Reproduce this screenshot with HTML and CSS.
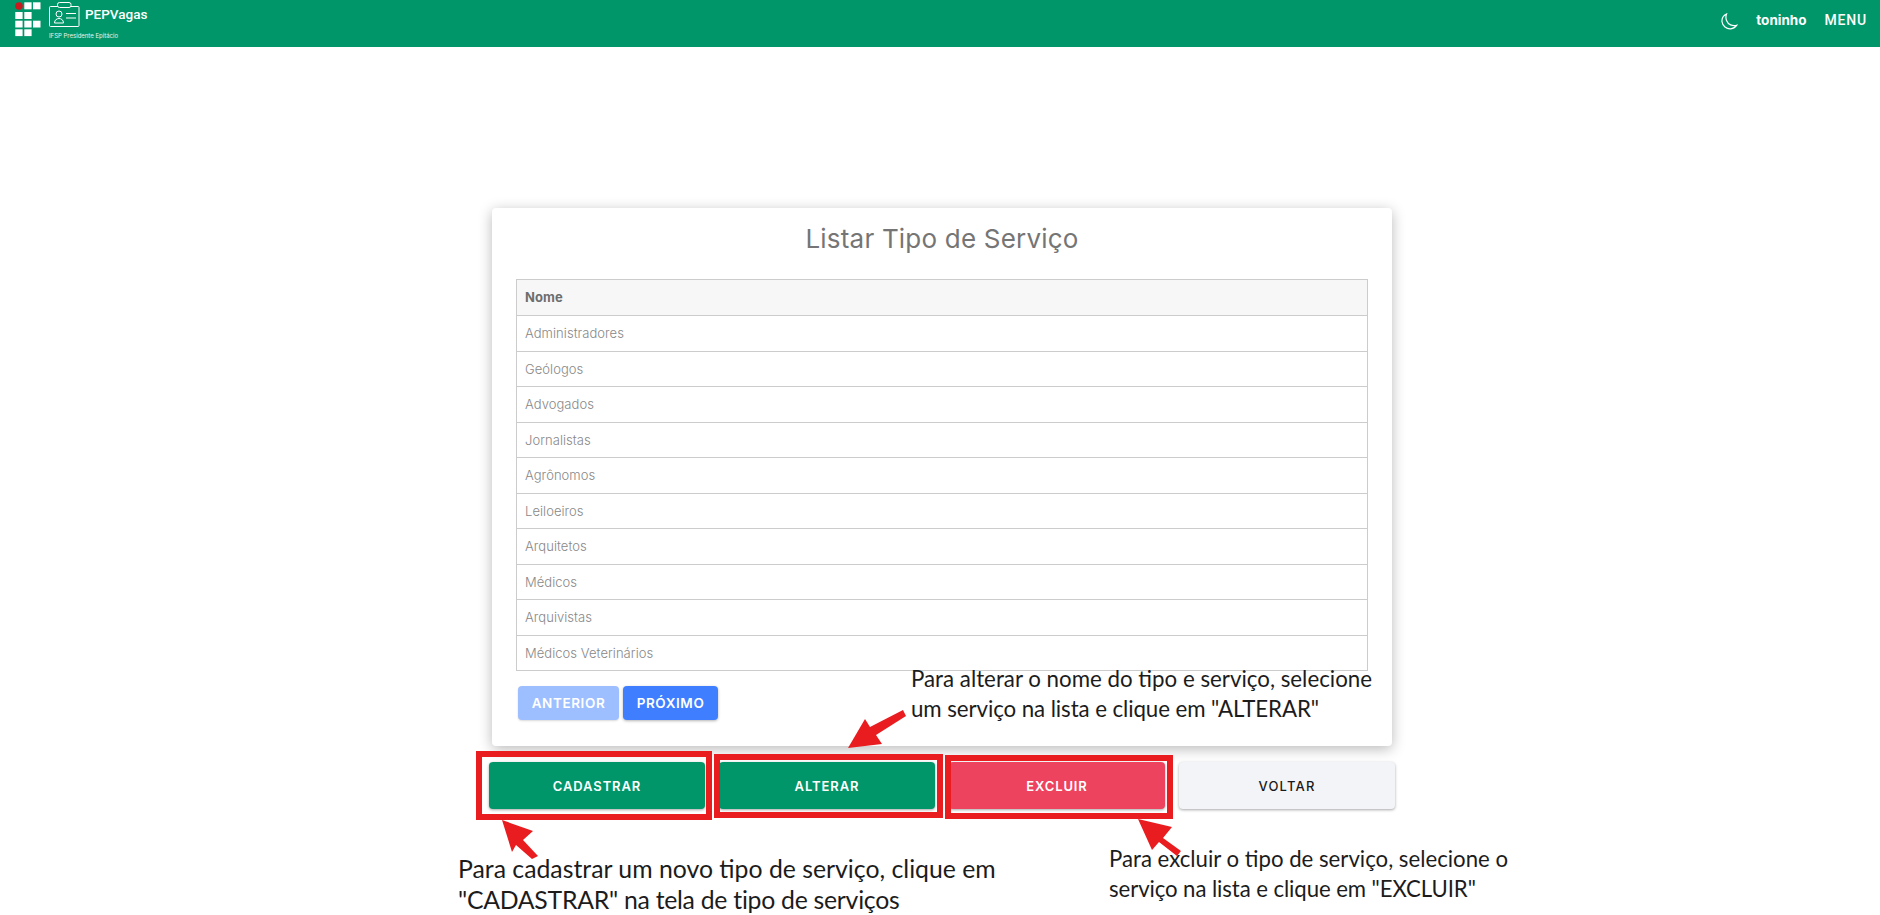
FILE: index.html
```html
<!DOCTYPE html>
<html lang="pt-BR">
<head>
  <meta charset="UTF-8">
  <meta name="viewport" content="width=device-width, initial-scale=1.0">
  <title>PEPVagas</title>
  <link rel="stylesheet" href="styles.css">
</head>
<body>
  <header class="topbar">
    <div class="brand">
      <svg class="if-logo" width="27" height="36" viewBox="0 0 27 36">
        <circle cx="4" cy="4" r="3.8" fill="#c8191f"/>
        <rect x="9.300" y="0.300" width="7.300" height="7" fill="#fff"/>
        <rect x="18" y="0.300" width="7.500" height="7" fill="#fff"/>
        <rect x="0.300" y="10" width="7.300" height="7" fill="#fff"/>
        <rect x="9.300" y="10" width="7.300" height="7" fill="#fff"/>
        <rect x="0.300" y="18.700" width="7.300" height="6.800" fill="#fff"/>
        <rect x="9.300" y="18.700" width="7.300" height="6.800" fill="#fff"/>
        <rect x="18" y="18.700" width="7.500" height="6.800" fill="#fff"/>
        <rect x="0.300" y="27.300" width="7.300" height="6.800" fill="#fff"/>
        <rect x="9.300" y="27.300" width="7.300" height="6.800" fill="#fff"/>
      </svg>
      <div class="brand-text">
        <div class="brand-top">
          <svg class="badge" width="31" height="25" viewBox="0 0 31 25" fill="none" stroke="#fff">
            <rect x="0.500" y="4.500" width="29.500" height="20" rx="1"/>
            <rect x="8.500" y="0.500" width="13.500" height="5" rx="2" fill="#009669"/>
            <circle cx="10" cy="12" r="3"/>
            <path d="M5.500 21c0-6 9-6 9 0z"/>
            <path d="M17 11.500h10M17 16h10"/>
          </svg>
          <span class="brand-name">PEPVagas</span>
        </div>
        <div class="brand-sub">IFSP Presidente Epitácio</div>
      </div>
    </div>
    <div class="top-actions">
      <svg class="moon" width="17" height="17" viewBox="0 0 17 17" fill="none" stroke="#fff" stroke-width="1.200">
        <path d="M5.500 1C2.500 2.500 0.700 5.500 1 8.700 1.500 13 5.500 16.200 9.800 15.800 12.300 15.500 14.500 14.200 15.800 12.200 11.500 13.500 7 11.500 5.500 7.500 4.800 5.500 4.800 3 5.500 1Z"/>
      </svg>
      <span class="user">toninho</span>
      <span class="menu">MENU</span>
    </div>
  </header>

  <main class="content">
    <section class="card">
      <h1>Listar Tipo de Serviço</h1>
      <table class="list">
        <thead>
          <tr><th>Nome</th></tr>
        </thead>
        <tbody>
          <tr><td>Administradores</td></tr>
          <tr><td>Geólogos</td></tr>
          <tr><td>Advogados</td></tr>
          <tr><td>Jornalistas</td></tr>
          <tr><td>Agrônomos</td></tr>
          <tr><td>Leiloeiros</td></tr>
          <tr><td>Arquitetos</td></tr>
          <tr><td>Médicos</td></tr>
          <tr><td>Arquivistas</td></tr>
          <tr><td>Médicos Veterinários</td></tr>
        </tbody>
      </table>
      <div class="pager">
        <button class="btn-page disabled">ANTERIOR</button>
        <button class="btn-page">PRÓXIMO</button>
      </div>
    </section>
    <div class="actions">
      <button class="btn green">CADASTRAR</button>
      <button class="btn green">ALTERAR</button>
      <button class="btn red">EXCLUIR</button>
      <button class="btn light">VOLTAR</button>
    </div>
  </main>

  <!-- marcacoes do tutorial por cima da tela -->
  <div class="mark mark-cadastrar"></div>
  <div class="mark mark-alterar"></div>
  <div class="mark mark-excluir"></div>
  <svg class="arrows" width="1880" height="915" viewBox="0 0 1880 915" fill="#e91c1f">
    <path d="M502 820 533 831 523 840 538 856 532 859 516 845 512 852Z"/>
    <path d="M848 748 865 719 870 727 903 710 906 716 876 735 882 744Z"/>
    <path d="M1138 819 1172 827 1163 838 1181 851 1177 856 1159 842 1152 850Z"/>
  </svg>
  <p class="note note-cadastrar">Para cadastrar um novo tipo de serviço, clique em<br><span class="line2">"CADASTRAR" na tela de tipo de serviços</span></p>
  <p class="note note-alterar">Para alterar o nome do tipo e serviço, selecione<br><span class="line2">um serviço na lista e clique em "ALTERAR"</span></p>
  <p class="note note-excluir">Para excluir o tipo de serviço, selecione o<br><span class="line2">serviço na lista e clique em "EXCLUIR"</span></p>
</body>
</html>
```

FILE: styles.css
```css
* {
  box-sizing: border-box;
}
html, body {
  height: 915px;
  overflow: hidden;
}
body {
  margin: 0;
  background-color: #fff;
  font-family: Inter, "Liberation Sans", sans-serif;
  position: relative;
}

.topbar {
  height: 47px;
  background-color: #009669;
  color: #fff;
  display: flex;
  justify-content: space-between;
  padding: 2px 13px 0 15px;
}
.brand {
  display: flex;
  gap: 7px;
}
.if-logo {
  display: block;
}
.brand-top {
  display: flex;
  align-items: center;
  gap: 5px;
}
.badge {
  display: block;
}
.brand-name {
  font-family: Roboto, sans-serif;
  font-size: 13.500px;
  font-weight: 500;
  margin-top: -2px;
}
.brand-sub {
  font-size: 6px;
  margin-top: 4px;
  line-height: 9px;
  opacity: 0.9;
}
.top-actions {
  display: flex;
  align-items: center;
  height: 36px;
}
.moon {
  margin-right: 18px;
  margin-top: 3px;
}
.user {
  font-size: 13.500px;
  font-weight: 700;
  margin-right: 18px;
}
.menu {
  font-family: Roboto, sans-serif;
  font-size: 14px;
  font-weight: 500;
  letter-spacing: 0.8px;
}

.content {
  margin-left: 489px;
  width: 906px;
  padding-top: 161px;
}
.card {
  margin: 0 3px;
  height: 538px;
  background-color: #fff;
  border-radius: 4px;
  padding: 0 24px;
  box-shadow: 0 3px 14px rgba(0, 0, 0, 0.28);
}
h1 {
  margin: 0;
  padding-top: 16px;
  height: 71px;
  font-size: 26px;
  line-height: 30px;
  font-weight: 400;
  text-align: center;
  color: #757575;
  letter-spacing: 0.2px;
}
.list {
  width: 100%;
  border-collapse: collapse;
  font-size: 13px;
  letter-spacing: 0.05px;
  color: #888;
}
.list th, .list td {
  border: 1px solid #ccc;
  padding: 0 8px;
  text-align: left;
  height: 35.500px;
}
.list th {
  height: 36px;
  padding-bottom: 2px;
  background-color: #f7f7f7;
  color: #6e6e6e;
  font-weight: 700;
}
.list td {
  font-weight: 300;
}
.pager {
  display: flex;
  gap: 4px;
  margin: 15px 0 0 2px;
}
.btn-page {
  height: 34px;
  width: 95px;
  border: 0;
  border-radius: 4px;
  background-color: #3f7fff;
  color: #fff;
  font-family: inherit;
  font-size: 13.500px;
  font-weight: 600;
  letter-spacing: 0.6px;
  box-shadow: 0 1px 3px rgba(0, 0, 0, 0.3);
}
.btn-page.disabled {
  width: 101px;
  background-color: #9dbfff;
  box-shadow: 0 1px 2px rgba(0, 0, 0, 0.15);
}

.actions {
  display: grid;
  grid-template-columns: repeat(4, 1fr);
  gap: 14px;
  margin-top: 16px;
}
.btn {
  height: 47px;
  border: 0;
  border-radius: 4px;
  font-family: inherit;
  font-size: 13px;
  font-weight: 600;
  letter-spacing: 0.9px;
  color: #fff;
  box-shadow: 0 1px 3px rgba(0, 0, 0, 0.35);
}
.btn.green {
  background-color: #009669;
}
.btn.red {
  background-color: #ed435f;
}
.btn.light {
  background-color: #f3f4f8;
  color: #1a1a1a;
  font-weight: 500;
  letter-spacing: 1.2px;
}

/* marcacoes */
.mark {
  position: absolute;
  border: 6px solid #e91c1f;
}
.mark-cadastrar {
  left: 476px;
  top: 751px;
  width: 236px;
  height: 69px;
}
.mark-alterar {
  left: 714px;
  top: 754px;
  width: 229px;
  height: 64px;
}
.mark-excluir {
  left: 945px;
  top: 755px;
  width: 228px;
  height: 64px;
}
.arrows {
  position: absolute;
  left: 0;
  top: 0;
}
.note {
  position: absolute;
  margin: 0;
  font-family: Lato, sans-serif;
  color: #1c1c1c;
  white-space: nowrap;
}
.note-cadastrar {
  left: 458px;
  top: 853px;
  font-size: 24.800px;
  line-height: 31px;
}
.note-cadastrar .line2 {
  letter-spacing: -0.27px;
}
.note-alterar {
  left: 911px;
  top: 664px;
  font-size: 22.300px;
  line-height: 30px;
}
.note-excluir {
  left: 1109px;
  top: 844px;
  font-size: 22.200px;
  line-height: 30px;
}
.note-alterar .line2, .note-excluir .line2 {
  letter-spacing: -0.09px;
}
```
